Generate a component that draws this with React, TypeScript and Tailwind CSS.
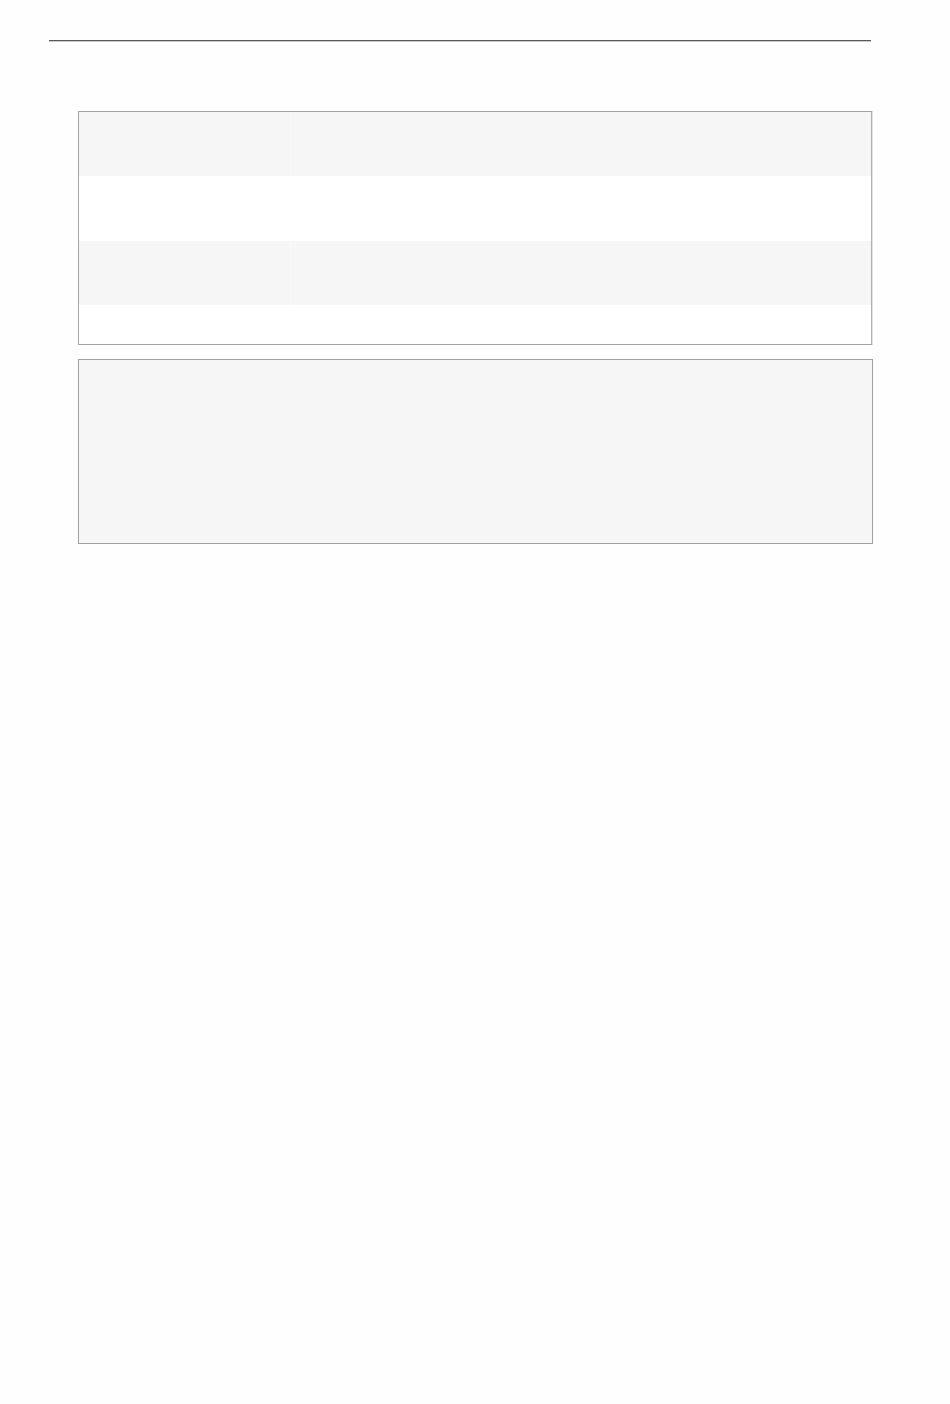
const rows = [
  { striped: true, height: 'h-[64px]' },
  { striped: false, height: 'h-[65px]' },
  { striped: true, height: 'h-[64px]' },
  { striped: false, height: 'h-[39px]' },
]

export default function App() {
  return (
    <div className="min-h-[1404px] w-full bg-[#fefefe] font-['Liberation_Sans',sans-serif]">
      <div className="pl-[49px] pt-[40px]">
        <div className="w-[822px] border-t border-b border-t-[#5a5a5a] border-b-[#c8c8c8]" />
      </div>

      <div className="ml-[78px] mt-[69px] w-[794px]">
        <div className="border border-[#a3a3a3] border-r-[#b0b0b0] shadow-[1px_0_0_#e2e2e2]">
          {rows.map((row, i) => (
            <div className={`flex ${row.height} ${row.striped ? 'bg-[#f6f6f6]' : 'bg-white'}`} key={i}>
              <div
                className={`w-[212px] shrink-0 border-r ${row.striped ? 'border-[#f9f9f9]' : 'border-transparent'}`}
              />
              <div className="flex-1" />
            </div>
          ))}
        </div>

        <div className="mt-[14px] h-[185px] w-[795px] border border-[#a0a0a0] bg-[#f6f6f6]" />
      </div>
    </div>
  )
}
